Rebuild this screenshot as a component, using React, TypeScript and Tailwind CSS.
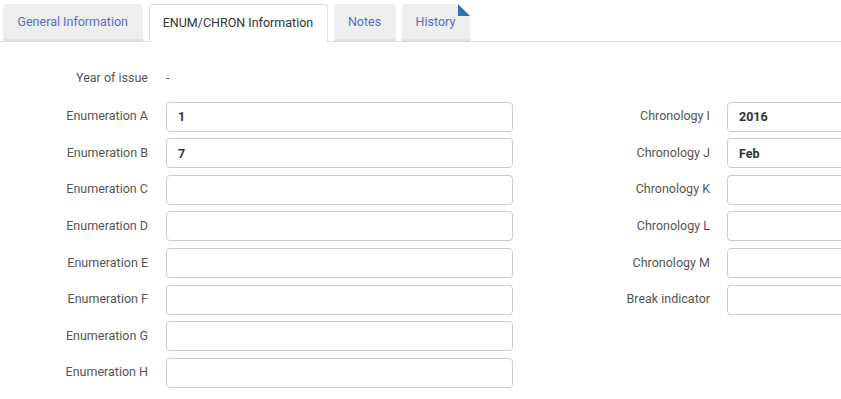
import React from 'react';

type Field = { label: string; value?: string };

const tabs = [
  { name: 'General Information', width: 'w-[139.5px]', active: false },
  { name: 'ENUM/CHRON Information', width: 'w-[179px]', active: true },
  { name: 'Notes', width: 'w-[62px]', active: false },
  { name: 'History', width: 'w-[68px]', active: false, flag: true },
];

const enumeration: Field[] = [
  { label: 'Enumeration A', value: '1' },
  { label: 'Enumeration B', value: '7' },
  { label: 'Enumeration C' },
  { label: 'Enumeration D' },
  { label: 'Enumeration E' },
  { label: 'Enumeration F' },
  { label: 'Enumeration G' },
  { label: 'Enumeration H' },
];

const chronology: Field[] = [
  { label: 'Chronology I', value: '2016' },
  { label: 'Chronology J', value: 'Feb' },
  { label: 'Chronology K' },
  { label: 'Chronology L' },
  { label: 'Chronology M' },
  { label: 'Break indicator' },
];

const TextInput: React.FC<{ value?: string }> = ({ value }) => (
  <input
    type="text"
    defaultValue={value}
    className="w-[347px] h-[30px] shrink-0 rounded-[4px] border border-[#cccccc] bg-white pl-[11px] text-[12.5px] font-bold text-[#333333] outline-none"
  />
);

const App: React.FC = () => {
  return (
    <div className="w-[841px] h-[399px] overflow-hidden bg-white font-['Roboto',sans-serif] text-[12.5px]">
      {/* tab bar */}
      <div className="flex items-end gap-[6px] pl-[3px] pt-[4px] border-b border-[#dddddd]">
        {tabs.map((tab) =>
          tab.active ? (
            <div
              key={tab.name}
              className={`${tab.width} h-[38px] -mb-px flex items-center justify-center rounded-t-[4px] border border-b-0 border-[#dddddd] bg-white text-[#333333]`}
            >
              {tab.name}
            </div>
          ) : (
            <div
              key={tab.name}
              className={`${tab.width} relative h-[37px] pt-[2px] flex items-center justify-center rounded-t-[4px] border-b-2 border-[#e2e2e2] bg-[#eeeeee] text-[#5a6fc8]`}
            >
              {tab.name}
              {tab.flag && (
                <svg className="absolute top-0 right-0" width="12" height="12" viewBox="0 0 12 12">
                  <polygon points="0,0 12,0 12,12" fill="#ffffff" />
                  <polygon points="0,0 0,12 12,12" fill="#2f74b8" />
                </svg>
              )}
            </div>
          )
        )}
      </div>

      {/* form */}
      <div className="flex pt-[23px]">
        <div className="flex flex-col gap-[6.6px] w-[513px] shrink-0">
          <div className="flex items-center h-[30px] pb-[3px]">
            <span className="w-[148px] text-right text-[#555555]">Year of issue</span>
            <span className="ml-[18px] text-[#555555]">-</span>
          </div>
          {enumeration.map((f) => (
            <div key={f.label} className="flex items-center h-[30px]">
              <span className="w-[148px] text-right text-[#555555]">{f.label}</span>
              <span className="ml-[18px]">
                <TextInput value={f.value} />
              </span>
            </div>
          ))}
        </div>
        <div className="flex flex-col gap-[6.6px] ml-[49px] pt-[36.6px] shrink-0">
          {chronology.map((f) => (
            <div key={f.label} className="flex items-center h-[30px]">
              <span className="w-[148px] text-right text-[#555555]">{f.label}</span>
              <span className="ml-[17px]">
                <TextInput value={f.value} />
              </span>
            </div>
          ))}
        </div>
      </div>
    </div>
  );
};

export default App;
